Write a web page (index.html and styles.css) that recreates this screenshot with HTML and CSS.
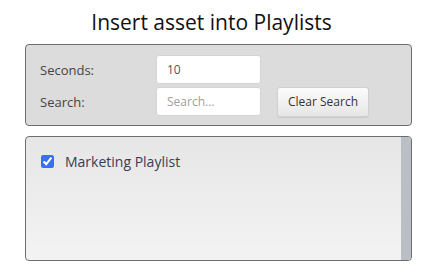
FILE: index.html
```html
<!DOCTYPE html>
<html>
<head>
<meta charset="utf-8">
<link rel="stylesheet" href="styles.css">
</head>
<body>
<div class="dialog">
  <h1 class="title">Insert asset into Playlists</h1>
  <div class="panel form">
    <label class="label">Seconds:</label>
    <input class="field" type="text" value="10">
    <span></span>
    <label class="label">Search:</label>
    <input class="field" type="text" placeholder="Search...">
    <button class="btn">Clear Search</button>
  </div>
  <div class="panel list">
    <div class="items">
      <label class="item"><input type="checkbox" class="check" checked><span>Marketing Playlist</span></label>
    </div>
    <div class="scrollbar"></div>
  </div>
</div>
</body>
</html>
```
FILE: styles.css
```css
html, body {
  margin: 0;
  padding: 0;
  background: #fff;
  font-family: "Open Sans", sans-serif;
}
.dialog {
  width: 443px;
  padding: 0 31px 0 25px;
  box-sizing: border-box;
}
.title {
  margin: 0 7px 0 -7px;
  height: 44px;
  box-sizing: border-box;
  padding-top: 8px;
  text-align: center;
  font-size: 21px;
  font-weight: 400;
  color: #111;
  line-height: 29px;
}
.panel {
  border: 1px solid #6e6e6e;
  border-radius: 4px;
  box-sizing: border-box;
}
.form {
  height: 82px;
  background: #dcdcdc;
  display: grid;
  grid-template-columns: 116px 105px auto;
  grid-template-rows: 29px 29px;
  row-gap: 3px;
  column-gap: 0;
  padding: 10px 0 0 14px;
  align-items: center;
}
.label {
  font-size: 13px;
  color: #444;
}
.field {
  width: 105px;
  height: 29px;
  box-sizing: border-box;
  border: 1px solid #d4d4d4;
  border-radius: 3px;
  background: #fff;
  font-family: "Open Sans", sans-serif;
  font-size: 12px;
  color: #555;
  padding: 0 10px;
  outline: none;
}
.field::placeholder {
  color: #a0a0a0;
}
.btn {
  justify-self: start;
  margin-left: 16px;
  width: 92px;
  height: 30px;
  border: 1px solid #d0d0d0;
  border-radius: 3px;
  background: linear-gradient(#fcfcfc, #e6e6e6);
  box-shadow: 0 1px 1px rgba(0,0,0,0.08);
  font-family: "Open Sans", sans-serif;
  font-size: 12px;
  color: #333;
  padding: 0;
}
.list {
  margin-top: 10px;
  height: 125px;
  display: flex;
  overflow: hidden;
  background: linear-gradient(#e6e6e6, #f3f3f3);
}
.items {
  flex: 1;
  padding: 15px 0 0 15px;
}
.item {
  display: flex;
  align-items: center;
  gap: 11px;
  font-size: 14px;
  color: #3c3c50;
}
.check {
  margin: 0;
  width: 13px;
  height: 13px;
  accent-color: #3a6ff2;
}
.scrollbar {
  width: 10px;
  background: #b9bfc5;
}
```
